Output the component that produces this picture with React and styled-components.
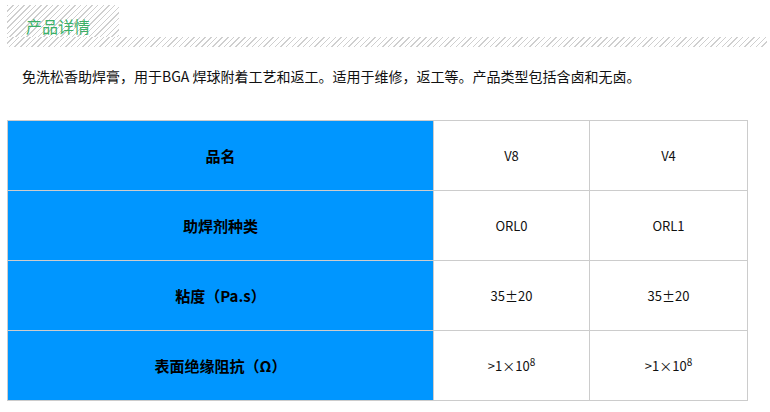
import React from "react";
import styled, { createGlobalStyle } from "styled-components";

const GlobalStyle = createGlobalStyle`
  body {
    margin: 0;
    background: #ffffff;
    font-family: "Noto Sans CJK SC", "Noto Sans", sans-serif;
  }
`;

const hatch = `repeating-linear-gradient(
  135deg,
  #cfcfcf 0px,
  #cfcfcf 1px,
  #ffffff 1px,
  #ffffff 4px
)`;

const Page = styled.div`
  width: 770px;
  height: 412px;
  padding: 5px 0 0 7px;
  box-sizing: border-box;
  overflow: hidden;
`;

const Header = styled.div`
  display: flex;
  flex-direction: column;
  width: 760px;
`;

const Tab = styled.div`
  width: 112px;
  height: 32px;
  background: ${hatch};
  display: flex;
  align-items: flex-end;
  padding-left: 19px;
  box-sizing: border-box;
`;

const TabTitle = styled.span`
  color: #3bb068;
  font-size: 16px;
  line-height: 22px;
`;

const Band = styled.div`
  height: 10px;
  background: ${hatch};
`;

const Intro = styled.p`
  margin: 19px 0 0 15px;
  font-size: 14px;
  line-height: 20px;
  color: #111;
`;

const Table = styled.table`
  margin-top: 34px;
  border-collapse: collapse;
  width: 741px;
  table-layout: fixed;
`;

const Row = styled.tr`
  height: 70px;
`;

const NameCell = styled.th`
  width: 425px;
  background: #0096ff;
  border: 1px solid #cccccc;
  font-size: 15px;
  font-weight: bold;
  color: #000;
  text-align: center;
  padding: 0;
`;

const ValueCell = styled.td`
  width: ${p => p.$w}px;
  border: 1px solid #cccccc;
  font-size: 13px;
  color: #111;
  text-align: center;
  padding: 0;
`;

const Sup = styled.sup`
  font-size: 10px;
  vertical-align: 5px;
  line-height: 0;
`;

const power = (
  <>
    &gt;1×10<Sup>8</Sup>
  </>
);

const rows = [
  { name: "品名", a: "V8", b: "V4" },
  { name: "助焊剂种类", a: "ORL0", b: "ORL1" },
  { name: "粘度（Pa.s）", a: "35±20", b: "35±20" },
  { name: "表面绝缘阻抗（Ω）", a: power, b: power },
];

export default function App() {
  return (
    <Page>
      <GlobalStyle />
      <Header>
        <Tab>
          <TabTitle>产品详情</TabTitle>
        </Tab>
        <Band />
      </Header>
      <Intro>
        免洗松香助焊膏，用于BGA 焊球附着工艺和返工。适用于维修，返工等。产品类型包括含卤和无卤。
      </Intro>
      <Table>
        <tbody>
          {rows.map((r, i) => (
            <Row key={i}>
              <NameCell>{r.name}</NameCell>
              <ValueCell $w={155}>{r.a}</ValueCell>
              <ValueCell $w={157}>{r.b}</ValueCell>
            </Row>
          ))}
        </tbody>
      </Table>
    </Page>
  );
}
